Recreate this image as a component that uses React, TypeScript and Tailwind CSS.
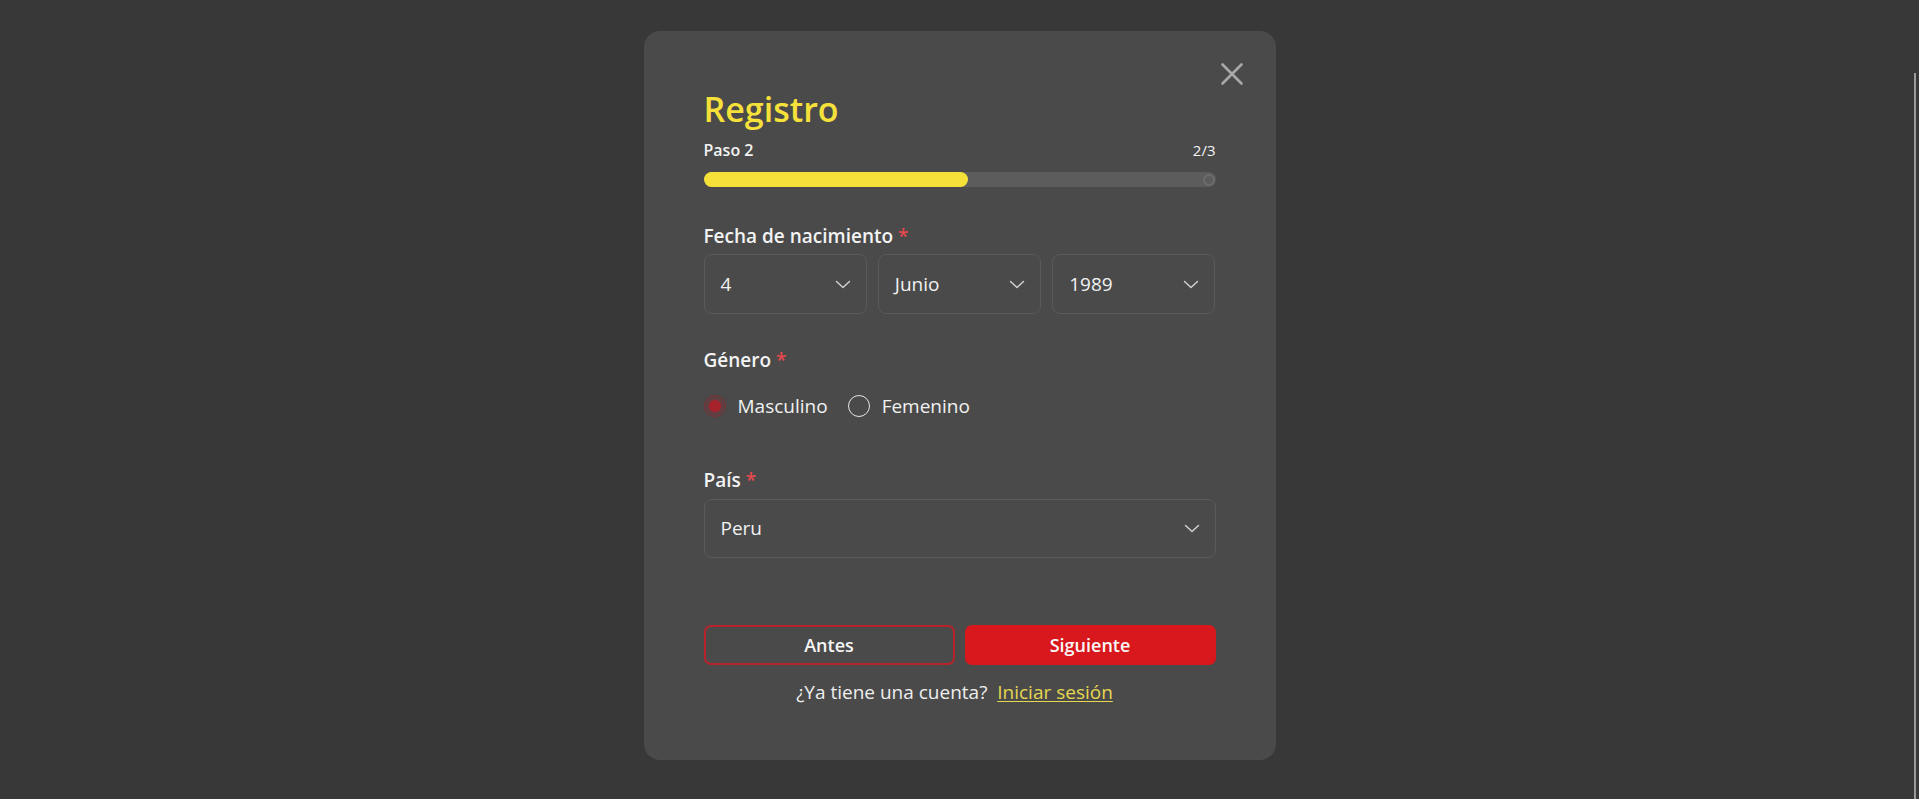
import { useState } from 'react';

const font = { fontFamily: '"Open Sans", "Noto Sans", sans-serif' };

function Chevron() {
  return (
    <svg width="16" height="9" viewBox="0 0 16 9" fill="none" className="shrink-0">
      <path d="M1.5 1.5l6.5 6 6.5-6" stroke="#d4d4d4" strokeWidth="1.4" strokeLinecap="round" strokeLinejoin="round" />
    </svg>
  );
}

function SelectBox({ value, tall = true }: { value: string; tall?: boolean }) {
  return (
    <div
      className={`flex items-center justify-between rounded-[8px] border border-[#5a5a5a] pl-4 pr-[15px] text-[19px] text-[#f1f1f1] ${
        tall ? 'h-[60px]' : 'h-[59px]'
      }`}
    >
      <span>{value}</span>
      <Chevron />
    </div>
  );
}

function Label({ children }: { children: React.ReactNode }) {
  return (
    <div className="text-[19px] font-semibold leading-[24px] text-[#f3f3f3]">
      {children} <span className="text-[#e5484d]">*</span>
    </div>
  );
}

function Radio({ checked }: { checked: boolean }) {
  if (checked) {
    return (
      <span className="flex h-[22px] w-[22px] items-center justify-center rounded-full border border-[#7c3237]">
        <span className="h-[12px] w-[12px] rounded-full bg-[#a6232c] shadow-[0_0_4px_2px_rgba(166,35,44,0.55)]" />
      </span>
    );
  }
  return <span className="h-[22px] w-[22px] rounded-full border-[1.5px] border-[#e6e6e6]" />;
}

export default function App() {
  const [gender, setGender] = useState<'m' | 'f'>('m');

  return (
    <div className="min-h-[799px] w-full bg-[#383838] pt-[31px]" style={font}>
      <div className="relative mx-auto w-[632px] rounded-[16px] bg-[#4a4a4a] px-[60px] pb-[56px] pt-[58px]">
        <button type="button" className="absolute right-[33px] top-[32px]" aria-label="Cerrar">
          <svg width="22" height="22" viewBox="0 0 22 22" fill="none">
            <path d="M1.5 1.5l19 19M20.5 1.5l-19 19" stroke="#a8a8a8" strokeWidth="2.6" strokeLinecap="round" />
          </svg>
        </button>

        <h1 className="text-[34px] font-semibold leading-[40px] text-[#f6e13a]">Registro</h1>

        <div className="mt-[11px] flex items-center justify-between leading-[20px] text-[#f3f3f3]">
          <span className="text-[16px] font-semibold">Paso 2</span>
          <span className="text-[15px]">2/3</span>
        </div>

        <div className="relative mt-[12px] h-[15px] rounded-full bg-[#5c5c5c]">
          <div className="h-full w-[264px] rounded-full bg-[#f6e13a]" />
          <div className="absolute right-[1px] top-1/2 h-[12px] w-[12px] -translate-y-1/2 rounded-full border-2 border-[#6c6c6c]" />
        </div>

        <div className="mt-[37px]">
          <Label>Fecha de nacimiento</Label>
        </div>
        <div className="mt-[6px] grid grid-cols-3 gap-[11px]">
          <SelectBox value="4" />
          <SelectBox value="Junio" />
          <SelectBox value="1989" />
        </div>

        <div className="mt-[34px]">
          <Label>Género</Label>
        </div>
        <div className="mt-[23px] flex h-[22px] items-center text-[19px] text-[#f1f1f1]">
          <label className="flex cursor-pointer items-center gap-3" onClick={() => setGender('m')}>
            <Radio checked={gender === 'm'} />
            Masculino
          </label>
          <label className="ml-[20px] flex cursor-pointer items-center gap-3" onClick={() => setGender('f')}>
            <Radio checked={gender === 'f'} />
            Femenino
          </label>
        </div>

        <div className="mt-[51px]">
          <Label>País</Label>
        </div>
        <div className="mt-[7px]">
          <SelectBox value="Peru" tall={false} />
        </div>

        <div className="mt-[67px] grid grid-cols-2 gap-[10px]">
          <button
            type="button"
            className="h-[40px] rounded-[7px] border-2 border-[#b8232b] text-[18px] font-semibold text-[#f5f5f5]"
          >
            Antes
          </button>
          <button
            type="button"
            className="h-[40px] rounded-[7px] bg-[#d8181c] text-[18px] font-semibold text-[#f8f8f8]"
          >
            Siguiente
          </button>
        </div>

        <p className="mt-[15px] pr-[10px] text-center text-[19px] leading-[24px] text-[#eeeeee]">
          ¿Ya tiene una cuenta?{'\u00a0 '}
          <a href="#" className="text-[#e6d751] underline underline-offset-2">
            Iniciar sesión
          </a>
        </p>
      </div>

      <div className="fixed bottom-0 right-[3px] top-[73px] w-[2px] bg-[#9a9a9a]" />
    </div>
  );
}
